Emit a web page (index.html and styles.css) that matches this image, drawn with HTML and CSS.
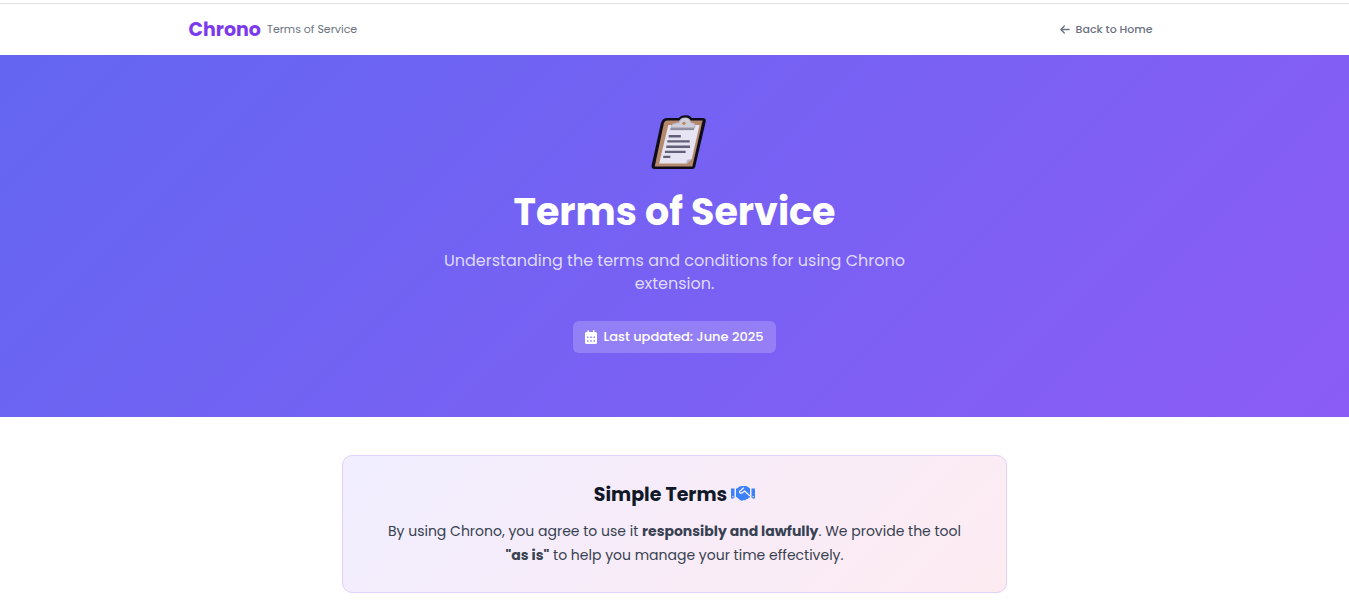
FILE: index.html
```html
<!DOCTYPE html>
<html lang="en">
<head>
<meta charset="utf-8">
<meta name="viewport" content="width=device-width, initial-scale=1">
<title>Chrono – Terms of Service</title>
<link rel="stylesheet" href="styles.css">
</head>
<body>
<header class="site-header">
  <div class="header-inner">
    <div class="brand">
      <span class="brand-name">Chrono</span>
      <span class="brand-page">Terms of Service</span>
    </div>
    <a class="back-link" href="#">
      <svg class="back-icon" viewBox="0 0 448 512" aria-hidden="true"><path fill="currentColor" d="M9.4 233.4c-12.5 12.5-12.5 32.8 0 45.3l160 160c12.5 12.5 32.8 12.5 45.3 0s12.5-32.8 0-45.3L109.2 288 416 288c17.7 0 32-14.3 32-32s-14.3-32-32-32l-306.7 0L214.6 118.6c12.5-12.5 12.5-32.8 0-45.3s-32.8-12.5-45.3 0l-160 160z"/></svg>
      Back to Home
    </a>
  </div>
</header>
<main>
  <section class="hero">
    <svg class="hero-icon" viewBox="36 28 165 164" aria-hidden="true">
      <g stroke="#100c1c" stroke-width="17" stroke-linejoin="round">
        <path fill="#100c1c" d="M84 48H189L158 181H46L73 58Q76 48 84 48Z"/>
        <path fill="#100c1c" d="M122 50Q125 40 138 40Q150 40 152 50Z"/>
      </g>
      <path fill="#b58a6c" d="M83 47H188L158 182H47L74 55Q76 47 83 47Z"/>
      <path fill="#e6e3f3" d="M87 60H179L156 160L142 173H60Z"/>
      <path fill="#b9b2c8" d="M156 160L138 176L143 162Z"/>
      <path fill="#b5b3c1" d="M94 68L96 60Q98 55 106 54L118 52Q120 38 137 38Q152 38 154 52L162 54Q169 56 167 62L165 70H94Z"/>
      <path fill="#d0ced9" d="M98 66Q97 58 107 57L120 54Q124 40 137 40Q150 40 153 54L160 57Q166 59 163 66Z"/>
      <circle cx="133" cy="55" r="5" fill="#b58a6c"/>
      <path stroke="#8d8b9b" stroke-width="6" d="M93 72H163"/>
      <path stroke="#625f76" stroke-width="7" d="M88 93H124M84 108H150M81 124H151M77 139H138M72 154H93"/>
    </svg>
    <h1 class="hero-title">Terms of Service</h1>
    <p class="hero-text">Understanding the terms and conditions for using Chrono extension.</p>
    <div class="updated">
      <svg class="updated-icon" viewBox="0 0 12 14" aria-hidden="true">
        <path fill="currentColor" fill-rule="evenodd" d="M2.5 1Q2.500 0 3.200 0T4 1V2H8V1Q8 0 8.800 0T9.500 1V2H10.500Q12 2 12 3.500V4.500H0V3.500Q0 2 1.500 2H2.500ZM0 4.500H12V12.500Q12 14 10.500 14H1.500Q0 14 0 12.500ZM2 6.500V8H3.500V6.500ZM5.200 6.500V8H6.800V6.500ZM8.500 6.500V8H10V6.500ZM2 10.300V11.800H3.500V10.300ZM5.200 10.300V11.800H6.800V10.300ZM8.500 10.300V11.800H10V10.300Z"/>
      </svg>
      Last updated: June 2025
    </div>
  </section>
  <section class="content">
    <div class="summary">
      <h2 class="summary-title">Simple Terms
        <svg class="summary-icon" viewBox="0 0 48 30" aria-hidden="true">
          <path fill="#3b82f6" fill-rule="evenodd" d="M0 5H7V22Q7 25 4 25H0ZM2.500 20V22.500H4.800V20ZM41 5H48V25H44Q41 25 41 22ZM43.200 20V22.500H45.500V20Z"/>
          <path fill="#3b82f6" d="M10 5H12L17 1Q19 0 22 0H29Q32 0 34 2L38 5V23H36Q34 27 31 26Q29 30 25 28Q22 31 18 28L11 22H10Z"/>
          <path fill="none" stroke="#f7ecf9" stroke-width="2.600" stroke-linecap="round" stroke-linejoin="round" d="M25 4L17 11Q17 15 22 14L27 10L37 19"/>
        </svg>
      </h2>
      <p class="summary-text">By using Chrono, you agree to use it <strong>responsibly and lawfully</strong>. We provide the tool <strong>"as is"</strong> to help you manage your time effectively.</p>
    </div>
  </section>
</main>
</body>
</html>
```
FILE: styles.css
```css
* {
  box-sizing: border-box;
}

body {
  margin: 0;
  padding-top: 3px;
  background: #fff;
  color: #374151;
  font-family: Poppins, Inter, sans-serif;
}

h1, h2, p {
  margin: 0;
}

.site-header {
  border-top: 1px solid #e0e0e3;
}

.header-inner {
  display: flex;
  align-items: center;
  justify-content: space-between;
  max-width: 1004px;
  min-height: 51px;
  margin: 0 auto;
  padding: 0 24px 0 16px;
}

.brand {
  display: flex;
  align-items: center;
  gap: 6px;
}

.brand-name {
  color: #7c3aed;
  font-size: 19px;
  font-weight: 700;
}

.brand-page {
  color: #6b7280;
  font-size: 11px;
}

.back-link {
  display: flex;
  align-items: center;
  gap: 6px;
  color: #6b7280;
  font-size: 11px;
  font-weight: 500;
  text-decoration: none;
}

.back-icon {
  width: 10px;
  height: 11px;
}

.hero {
  display: flex;
  flex-direction: column;
  align-items: center;
  padding: 59px 16px 64px;
  background: linear-gradient(135deg, #6366f1, #8b5cf6);
  color: #fff;
  text-align: center;
}

.hero-icon {
  width: 56px;
  height: 56px;
  margin-left: 8px;
}

.hero-title {
  margin-top: 18px;
  font-size: 38px;
  line-height: 48px;
  font-weight: 700;
}

.hero-text {
  max-width: 480px;
  margin-top: 13px;
  color: #dedafd;
  font-size: 16px;
  line-height: 23px;
}

.updated {
  display: flex;
  align-items: center;
  gap: 6px;
  margin-top: 26px;
  padding: 0 12px;
  border-radius: 6px;
  background: rgba(255, 255, 255, 0.2);
  font-size: 13px;
  line-height: 32px;
  font-weight: 500;
}

.updated-icon {
  width: 12px;
  height: 14px;
}

.content {
  padding: 38px 16px;
}

.summary {
  max-width: 665px;
  margin: 0 auto;
  padding: 25px 32px;
  border: 1px solid #e2d1f8;
  border-radius: 10px;
  background: linear-gradient(135deg, #f0eeff, #f7ecf9 45%, #fdebf1);
  text-align: center;
}

.summary-title {
  color: #111827;
  font-size: 19px;
  line-height: 28px;
  font-weight: 700;
}

.summary-icon {
  width: 24px;
  height: 15px;
}

.summary-text {
  margin-top: 10px;
  font-size: 14px;
  line-height: 24px;
}
```
